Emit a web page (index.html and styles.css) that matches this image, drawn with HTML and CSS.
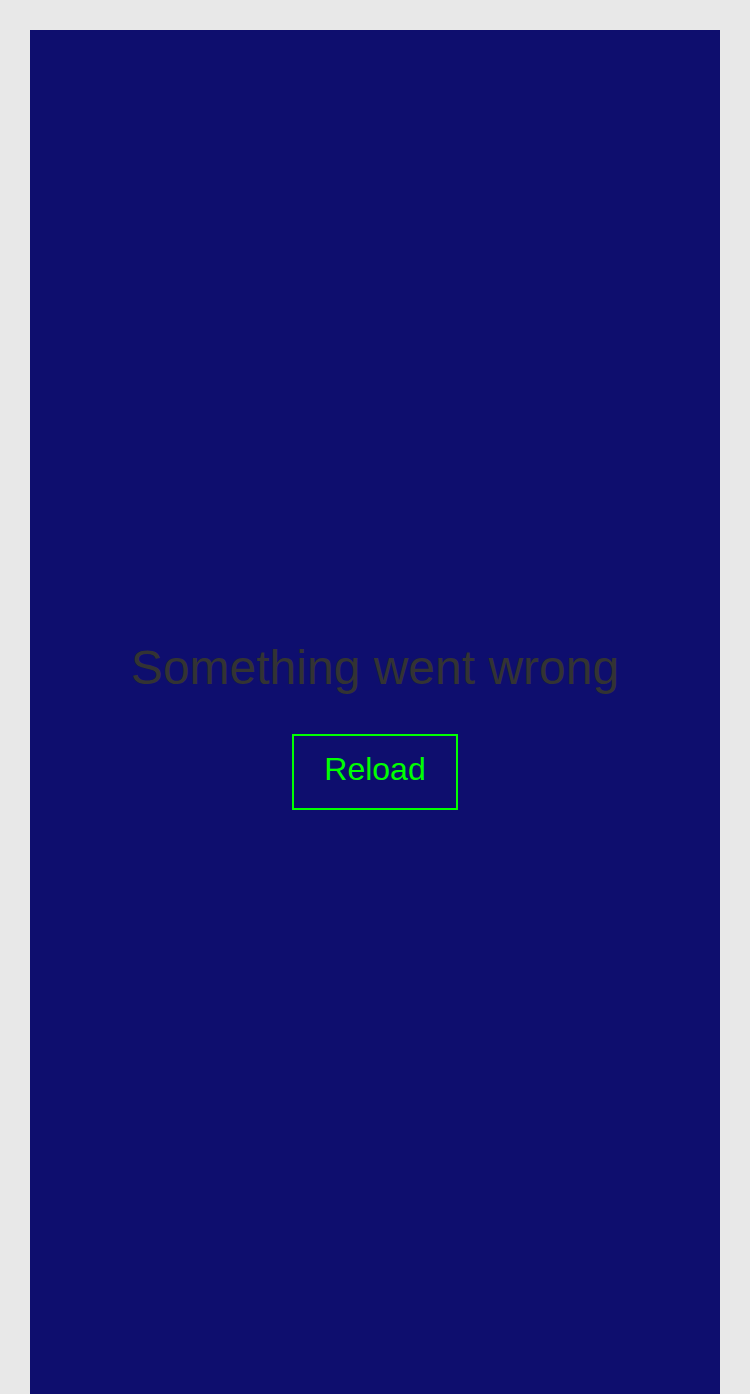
FILE: index.html
```html
<!DOCTYPE html>
<html>
<head>
<meta charset="utf-8">
<link rel="stylesheet" href="styles.css">
</head>
<body>
<div class="panel">
  <h1 class="title">Something went wrong</h1>
  <button class="reload">Reload</button>
</div>
</body>
</html>
```
FILE: styles.css
```css
html, body {
  margin: 0;
  padding: 0;
}
body {
  background: #e8e8e8;
  padding: 30px 30px 0 30px;
  font-family: "Liberation Sans", Arial, sans-serif;
}
.panel {
  background: #0e0e6e;
  min-height: 1389px;
  display: flex;
  flex-direction: column;
  align-items: center;
  justify-content: center;
}
.title {
  margin: 0;
  font-weight: normal;
  font-size: 48px;
  line-height: 58px;
  color: #333333;
}
.reload {
  margin-top: 37px;
  font-family: "Liberation Sans", Arial, sans-serif;
  font-size: 32px;
  line-height: 36px;
  color: #00ff00;
  background: transparent;
  border: 2px solid #00ff00;
  padding: 15px 30px 21px 30px;
  border-radius: 0;
}
```
